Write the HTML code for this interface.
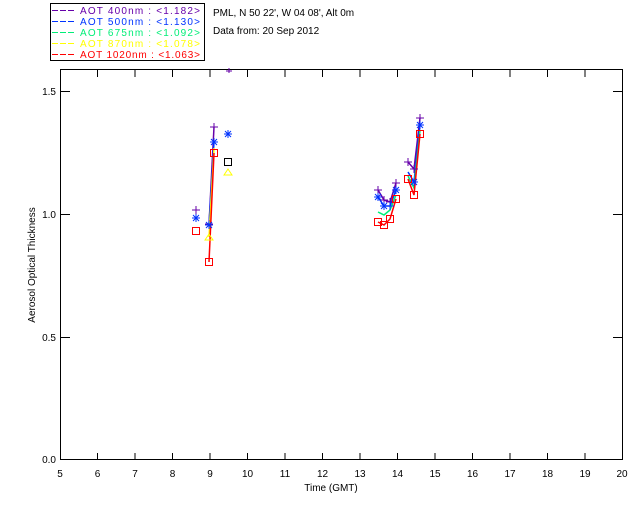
<!DOCTYPE html><html><head><style>body{margin:0;background:#fff}svg{display:block}text{font-family:"Liberation Sans",sans-serif;font-size:10px}</style></head><body>
<svg width="640" height="512" xmlns="http://www.w3.org/2000/svg">
<rect x="50.5" y="3.5" width="154" height="57" fill="none" stroke="#000"/>
<g stroke-dasharray="6,2" stroke-width="1">
<path d="M52 10.5h23" stroke="#6600aa"/><path d="M52 21.5h23" stroke="#0033ff"/><path d="M52 32.5h23" stroke="#00ee77"/><path d="M52 43.5h23" stroke="#ffff00"/><path d="M52 54.5h23" stroke="#ff0000"/>
</g>
<g font-size="11" xml:space="preserve">
<text x="80" y="14" fill="#6600aa" textLength="120">AOT  400nm : &lt;1.182&gt;</text>
<text x="80" y="25" fill="#0033ff" textLength="120">AOT  500nm : &lt;1.130&gt;</text>
<text x="80" y="36" fill="#00ee77" textLength="120">AOT  675nm : &lt;1.092&gt;</text>
<text x="80" y="47" fill="#ffff00" textLength="120">AOT  870nm : &lt;1.078&gt;</text>
<text x="80" y="58" fill="#ff0000" textLength="120">AOT 1020nm : &lt;1.063&gt;</text>
</g>
<text x="213" y="16">PML, N 50 22', W 04 08', Alt 0m</text>
<text x="213" y="34">Data from: 20 Sep 2012</text>
<rect x="60.5" y="69.5" width="562" height="390" fill="none" stroke="#000"/>
<g stroke="#000">
<path d="M97.5 460v-7M135 460v-7M172.5 460v-7M210 460v-7M247.5 460v-7M285 460v-7M322.5 460v-7M360 460v-7M397.5 460v-7M435 460v-7M472.5 460v-7M510 460v-7M547.5 460v-7M585 460v-7"/>
<path d="M97.5 70v7M135 70v7M172.5 70v7M210 70v7M247.5 70v7M285 70v7M322.5 70v7M360 70v7M397.5 70v7M435 70v7M472.5 70v7M510 70v7M547.5 70v7M585 70v7"/>
<path d="M60 91.5h10M60 214.5h10M60 337.5h10M613 91.5h10M613 214.5h10M613 337.5h10"/>
</g>
<g text-anchor="middle">
<text x="60" y="477">5</text><text x="97.5" y="477">6</text><text x="135" y="477">7</text><text x="172.5" y="477">8</text><text x="210" y="477">9</text><text x="247.5" y="477">10</text><text x="285" y="477">11</text><text x="322.5" y="477">12</text><text x="360" y="477">13</text><text x="397.5" y="477">14</text><text x="435" y="477">15</text><text x="472.5" y="477">16</text><text x="510" y="477">17</text><text x="547.5" y="477">18</text><text x="585" y="477">19</text><text x="622" y="477">20</text>
<text x="331" y="491">Time (GMT)</text>
</g>
<g text-anchor="end"><text x="56" y="95">1.5</text><text x="56" y="218">1.0</text><text x="56" y="341">0.5</text><text x="56" y="463">0.0</text></g>
<text transform="translate(35,265) rotate(-90)" text-anchor="middle" font-size="9">Aerosol Optical Thickness</text>
<g fill="none" stroke-width="1.5">
<path d="M209 225L214 127" stroke="#6600aa"/>
<path d="M209 225L214 142" stroke="#0033ff"/>
<path d="M209 237L214 148" stroke="#ffff00"/>
<path d="M209 262L214 153" stroke="#ff0000"/>
<path d="M378 190L384 200L390 202L396 183M408 162L414 169L420 118" stroke="#6600aa"/>
<path d="M378 197L384 206L390 206L396 190M408 172L414 182L420 125" stroke="#0033ff"/>
<path d="M378 212L384 215L390 210L396 195M408 176L414 188L420 130" stroke="#00ee77"/>
<path d="M378 222L384 225L390 219L396 199M408 179L414 195L420 134" stroke="#ff0000"/>
</g>
<g fill="none" stroke="#6600aa"><path d="M192 210h8M196 206v8M205 224h8M209 220v8M210 127h8M214 123v8M374 190h8M378 186v8M380 200h8M384 196v8M386 202h8M390 198v8M392 183h8M396 179v8M404 162h8M408 158v8M410 169h8M414 165v8M416 118h8M420 114v8M226 71h6M229 68v5"/></g>
<g fill="none" stroke="#0033ff"><path d="M192 218h8M196 214v8M193 215l6 6M199 215l-6 6M205 225h8M209 221v8M206 222l6 6M212 222l-6 6M210 142h8M214 138v8M211 139l6 6M217 139l-6 6M224 134h8M228 130v8M225 131l6 6M231 131l-6 6M374 197h8M378 193v8M375 194l6 6M381 194l-6 6M380 206h8M384 202v8M381 203l6 6M387 203l-6 6M386 206h8M390 202v8M392 190h8M396 186v8M393 187l6 6M399 187l-6 6M410 182h8M414 178v8M411 179l6 6M417 179l-6 6M416 125h8M420 121v8M417 122l6 6M423 122l-6 6"/></g>
<g fill="none" stroke="#ffff00"><path d="M224 175l4-6 4 6z M205 240l4-6 4 6z"/></g>
<g fill="none" stroke="#ff0000"><rect x="192.5" y="227.5" width="7" height="7"/><rect x="205.5" y="258.5" width="7" height="7"/><rect x="210.5" y="149.5" width="7" height="7"/><rect x="374.5" y="218.5" width="7" height="7"/><rect x="380.5" y="221.5" width="7" height="7"/><rect x="386.5" y="215.5" width="7" height="7"/><rect x="392.5" y="195.5" width="7" height="7"/><rect x="404.5" y="175.5" width="7" height="7"/><rect x="410.5" y="191.5" width="7" height="7"/><rect x="416.5" y="130.5" width="7" height="7"/></g>
<rect x="224.5" y="158.5" width="7" height="7" fill="none" stroke="#000"/>
</svg></body></html>
